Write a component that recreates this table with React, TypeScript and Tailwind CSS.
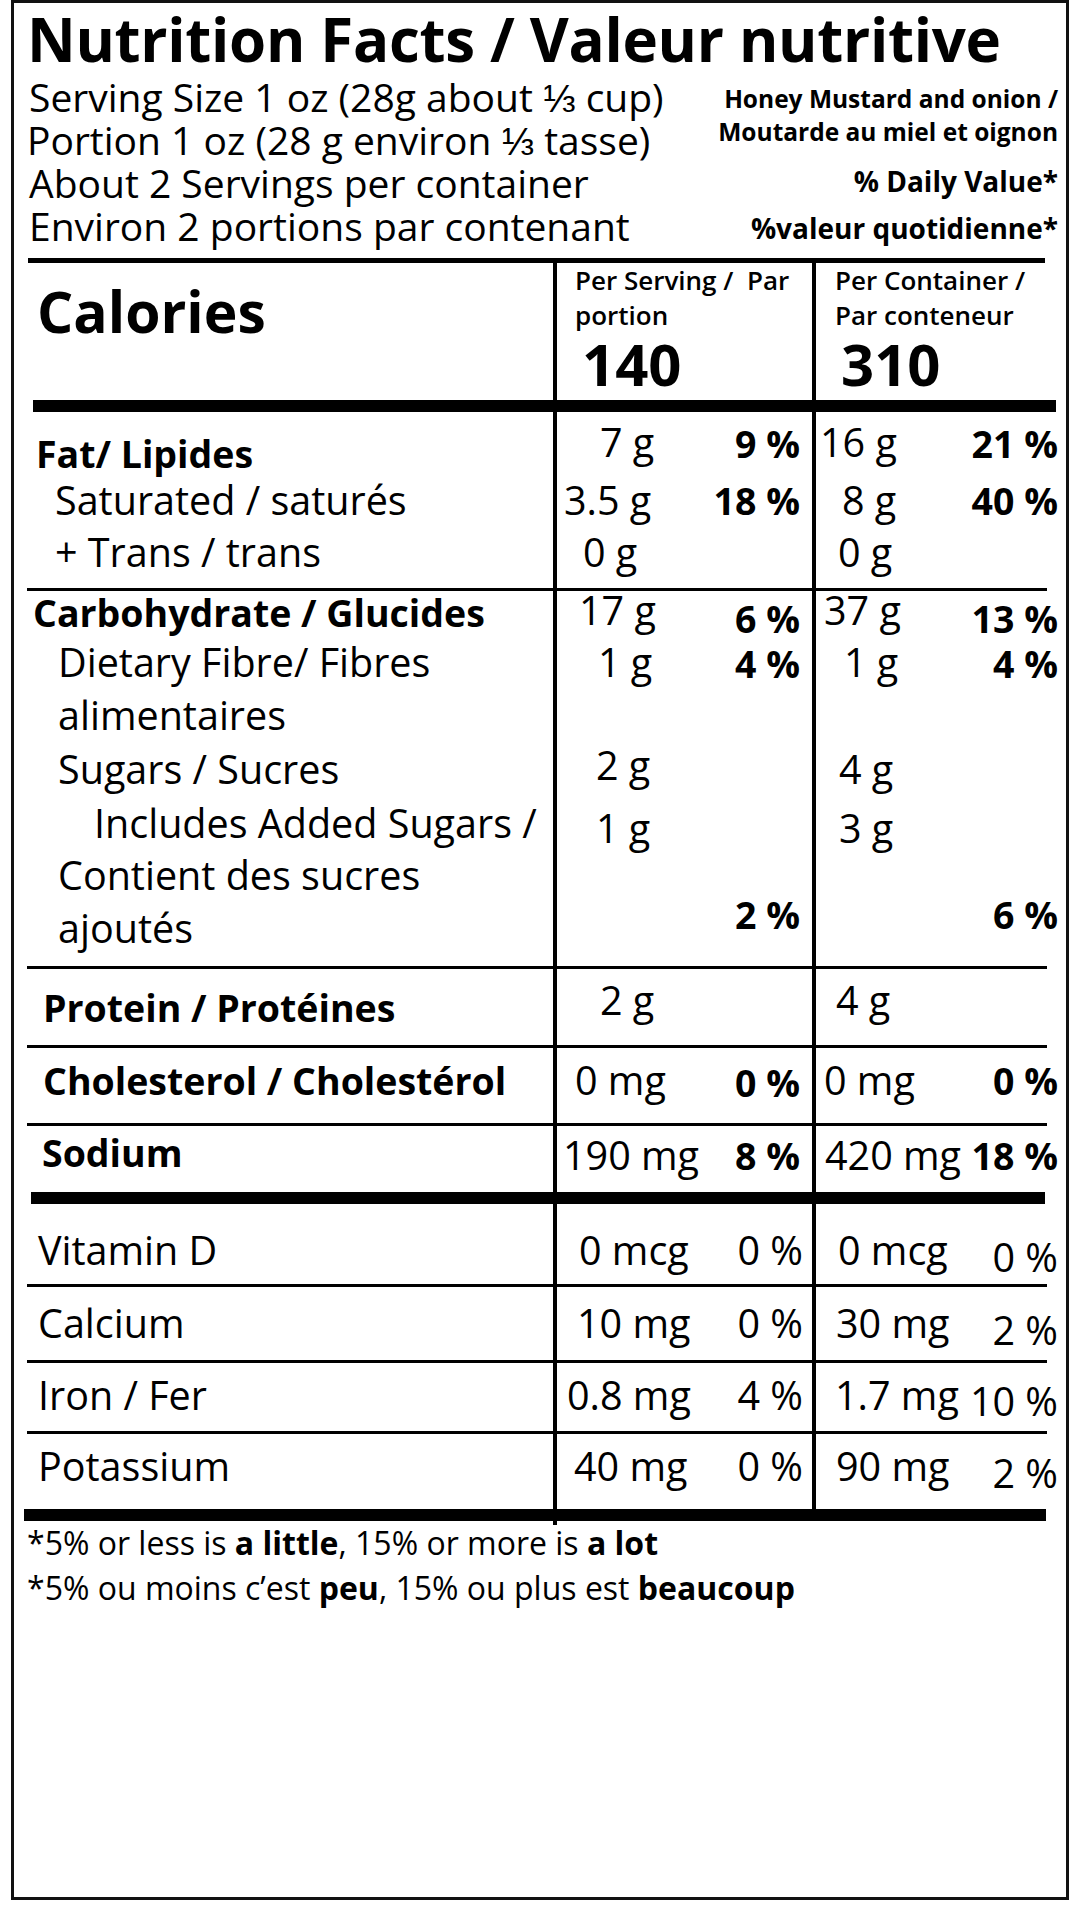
import type { ReactNode } from 'react';

const cols = 'grid grid-cols-[539px_259px_1fr] grid-rows-1';

type RowProps = {
  h: string;
  pad?: string;
  indent?: string;
  label?: ReactNode;
  labelCls?: string;
  a1?: string;
  a1Cls?: string;
  p1?: string;
  p1Cls?: string;
  a2?: string;
  a2Cls?: string;
  p2?: string;
  p2Cls?: string;
};

function Row({
  h,
  pad = 'pb-[4px]',
  indent = '',
  label,
  labelCls = '',
  a1,
  a1Cls = '',
  p1,
  p1Cls = '',
  a2,
  a2Cls = '',
  p2,
  p2Cls = '',
}: RowProps) {
  return (
    <div className={`${cols} ${h}`}>
      <div className={`flex items-center ${indent} ${pad}`}>
        <span className={labelCls}>{label}</span>
      </div>
      <div className={`flex items-center border-l-4 border-black pr-[12px] ${pad}`}>
        <span className={a1Cls}>{a1}</span>
        <span className={`ml-auto ${p1Cls}`}>{p1}</span>
      </div>
      <div className={`flex items-center border-l-4 border-black pr-[8px] ${pad}`}>
        <span className={a2Cls}>{a2}</span>
        <span className={`ml-auto ${p2Cls}`}>{p2}</span>
      </div>
    </div>
  );
}

// thin rule between groups, thick bars after calories / sodium / minerals
const Rule = () => <div className="ml-[13px] w-[1020px] h-[3px] bg-black" />;

const bold = 'text-[37.5px] font-bold';

export default function App() {
  return (
    <div className="w-[1080px] h-[1920px] bg-white text-black font-['Open_Sans',sans-serif]">
      <div className="ml-[11px] w-[1058px] h-[1900px] border-[3px] border-[#111]">
        {/* header */}
        <div className="pl-[13px] text-[60px] font-bold leading-[72px] tracking-[-0.3px]">
          Nutrition Facts / Valeur nutritive
        </div>
        <div className="flex justify-between">
          <div className="pl-[15px] text-[39px] leading-[43px]">
            <div>Serving Size 1 oz (28g about ⅓ cup)</div>
            <div className="-ml-[2px]">Portion 1 oz (28 g environ ⅓ tasse)</div>
            <div>About 2 Servings per container</div>
            <div>Environ 2 portions par contenant</div>
          </div>
          <div className="pr-[8px] pt-[7px] text-right font-bold">
            <div className="text-[24.5px] leading-[33px]">Honey Mustard and onion /</div>
            <div className="text-[24.5px] leading-[33px]">Moutarde au miel et oignon</div>
            <div className="mt-[11px] text-[28px] leading-[44px]">% Daily Value*</div>
            <div className="mt-[3px] text-[28px] leading-[44px]">%valeur quotidienne*</div>
          </div>
        </div>
        <div className="mt-[8px] ml-[14px] w-[1017px] h-[5px] bg-black" />

        {/* calories */}
        <div className={`${cols} h-[137px]`}>
          <div className="pl-[23px] pt-[20px] text-[57px] font-bold leading-none">Calories</div>
          <div className="border-l-4 border-black pl-[18px] text-[26px] font-semibold leading-[35px]">
            <div className="whitespace-pre">Per Serving /  Par</div>
            <div>portion</div>
            <div className="mt-[2px] pl-[7px] text-[58px] font-bold leading-none">140</div>
          </div>
          <div className="border-l-4 border-black pl-[19px] text-[26px] font-semibold leading-[35px]">
            <div>Per Container /</div>
            <div>Par conteneur</div>
            <div className="mt-[2px] pl-[6px] text-[58px] font-bold leading-none">310</div>
          </div>
        </div>
        <div className="ml-[19px] w-[1023px] h-[12px] bg-black" />

        <div className="text-[39.5px] leading-[1.2]">
          {/* fat */}
          <Row h="h-[62px]" pad="" indent="pl-[22px]" label="Fat/ Lipides" labelCls={`pt-[20px] ${bold}`}
            a1="7 g" a1Cls="ml-[43px]" p1="9 %" p1Cls={bold} a2="16 g" a2Cls="ml-[4px]" p2="21 %" p2Cls={bold} />
          <Row h="h-[55px]" pad="pb-[2px]" indent="pl-[41px]" label="Saturated / saturés"
            a1="3.5 g" a1Cls="ml-[7px]" p1="18 %" p1Cls={bold} a2="8 g" a2Cls="ml-[26px]" p2="40 %" p2Cls={bold} />
          <Row h="h-[59px]" pad="pb-[12px]" indent="pl-[41px]" label="+ Trans / trans"
            a1="0 g" a1Cls="ml-[26px]" a2="0 g" a2Cls="ml-[22px]" />
          <Rule />

          {/* carbohydrate */}
          <Row h="h-[49px]" pad="pb-[6px]" indent="pl-[19px]" label="Carbohydrate / Glucides" labelCls={bold}
            a1="17 g" a1Cls="ml-[22px] pb-[4px]" p1="6 %" p1Cls={`pt-[12px] ${bold}`} a2="37 g" a2Cls="ml-[8px] pb-[4px]" p2="13 %" p2Cls={`pt-[12px] ${bold}`} />
          <Row h="h-[52px]" pad="pb-[6px]" indent="pl-[44px]" label="Dietary Fibre/ Fibres"
            a1="1 g" a1Cls="ml-[41px]" p1="4 %" p1Cls={bold} a2="1 g" a2Cls="ml-[28px]" p2="4 %" p2Cls={bold} />
          <Row h="h-[52px]" indent="pl-[44px]" label="alimentaires" />
          <Row h="h-[55px]" indent="pl-[44px]" label="Sugars / Sucres"
            a1="2 g" a1Cls="ml-[39px] pb-[8px]" a2="4 g" a2Cls="ml-[23px]" />
          <Row h="h-[53px]" indent="pl-[80px]" label="Includes Added Sugars /"
            a1="1 g" a1Cls="ml-[39px] pt-[10px]" a2="3 g" a2Cls="ml-[23px] pt-[10px]" />
          <Row h="h-[52px]" indent="pl-[44px]" label="Contient des sucres" />
          <Row h="h-[62px]" pad="" indent="pl-[44px]" label="ajoutés" labelCls="pb-[13px]"
            p1="2 %" p1Cls={`pb-[42px] ${bold}`} p2="6 %" p2Cls={`pb-[42px] ${bold}`} />
          <Rule />

          <Row h="h-[76px]" pad="" indent="pl-[29px]" label="Protein / Protéines" labelCls={bold}
            a1="2 g" a1Cls="ml-[43px] pb-[12px]" a2="4 g" a2Cls="ml-[20px] pb-[12px]" />
          <Rule />
          <Row h="h-[75px]" pad="pb-[10px]" indent="pl-[29px]" label="Cholesterol / Cholestérol" labelCls={bold}
            a1="0 mg" a1Cls="ml-[18px]" p1="0 %" p1Cls={`pt-[4px] ${bold}`} a2="0 mg" a2Cls="ml-[8px]" p2="0 %" p2Cls={bold} />
          <Rule />
          <Row h="h-[66px]" pad="pb-[13px]" indent="pl-[28px]" label="Sodium" labelCls={bold}
            a1="190 mg" a1Cls="ml-[6px] pt-[6px]" p1="8 %" p1Cls={`pt-[6px] ${bold}`} a2="420 mg" a2Cls="ml-[9px] pt-[6px]" p2="18 %" p2Cls={`pt-[6px] ${bold}`} />
        </div>
        <div className="ml-[17px] w-[1014px] h-[12px] bg-black" />

        {/* vitamins and minerals */}
        <div className="text-[39.5px] leading-[1.2]">
          <Row h="h-[80px]" pad="pt-[13px]" indent="pl-[24px]" label="Vitamin D"
            a1="0 mcg" a1Cls="ml-[22px]" p1="0 %" p1Cls="-mr-[3px]" a2="0 mcg" a2Cls="ml-[22px]" p2="0 %" p2Cls="pt-[14px]" />
          <Rule />
          <Row h="h-[73px]" pad="" indent="pl-[24px]" label="Calcium"
            a1="10 mg" a1Cls="ml-[20px]" p1="0 %" p1Cls="-mr-[3px]" a2="30 mg" a2Cls="ml-[20px]" p2="2 %" p2Cls="pt-[14px]" />
          <Rule />
          <Row h="h-[68px]" pad="pb-[3px]" indent="pl-[24px]" label="Iron / Fer"
            a1="0.8 mg" a1Cls="ml-[10px]" p1="4 %" p1Cls="-mr-[3px]" a2="1.7 mg" a2Cls="ml-[19px]" p2="10 %" p2Cls="pt-[12px]" />
          <Rule />
          <Row h="h-[75px]" pad="pb-[10px]" indent="pl-[24px]" label="Potassium"
            a1="40 mg" a1Cls="ml-[17px]" p1="0 %" p1Cls="-mr-[3px]" a2="90 mg" a2Cls="ml-[20px]" p2="2 %" p2Cls="pt-[14px]" />
        </div>
        <div className="ml-[10px] w-[1022px] h-[12px] bg-black" />
        <div className="ml-[539px] w-[4px] h-[4px] bg-black" />

        {/* footnote */}
        <div className="-mt-[5px] pl-[13px] text-[32px] leading-[45px]">
          <div>
            *5% or less is <b>a little</b>, 15% or more is <b>a lot</b>
          </div>
          <div>
            *5% ou moins c’est <b>peu</b>, 15% ou plus est <b>beaucoup</b>
          </div>
        </div>
      </div>
    </div>
  );
}
